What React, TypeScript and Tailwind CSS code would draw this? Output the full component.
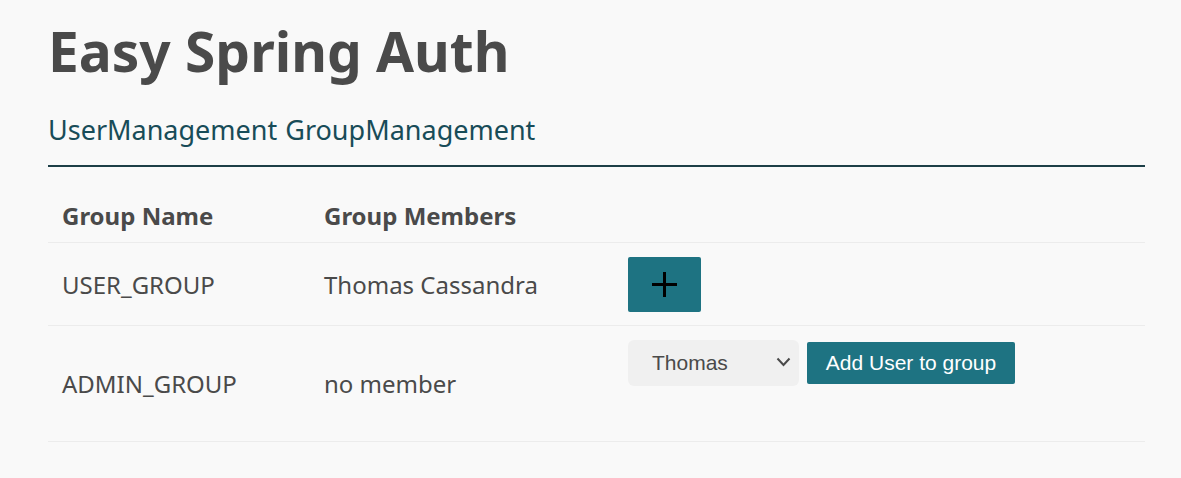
const groups = [
  { name: 'USER_GROUP', members: 'Thomas Cassandra' },
  { name: 'ADMIN_GROUP', members: 'no member' },
];

const App: React.FC = () => {
  return (
    <div className="min-h-[478px] bg-[#f9f9f9] pl-12 pr-9 text-[#4a4a4a] font-['Noto_Sans',sans-serif]">
      <h1 className="pt-[11px] text-[55px] font-bold leading-[80px]">Easy Spring Auth</h1>
      {/* nav */}
      <div className="mt-[23px] flex gap-[8px] border-b-2 border-[#1d3f47] pb-[19px] text-[27px] leading-[32px] text-[#184c58]">
        <a>UserManagement</a>
        <a>GroupManagement</a>
      </div>
      <table className="mt-[23px] w-full border-collapse text-left text-[24px] leading-[32px]">
        <thead>
          <tr className="border-b border-[#ececec]">
            <th className="w-[262px] px-[14px] py-[10px] font-bold">Group Name</th>
            <th className="w-[304px] px-[14px] py-[10px] font-bold">Group Members</th>
            <th></th>
          </tr>
        </thead>
        <tbody>
          <tr className="border-b border-[#ececec]">
            <td className="px-[14px] pb-[13px] pt-[14px] align-middle">{groups[0].name}</td>
            <td className="px-[14px] pb-[13px] pt-[14px] align-middle">{groups[0].members}</td>
            <td className="px-[14px] pb-[13px] pt-[14px] align-middle">
              <button className="flex h-[55px] w-[73px] items-center justify-center rounded-[2px] bg-[#1e7382]">
                <svg width="27" height="27" viewBox="0 0 27 27" stroke="#000" strokeWidth="3">
                  <line x1="13.5" y1="1" x2="13.5" y2="26" />
                  <line x1="1" y1="13.5" x2="26" y2="13.5" />
                </svg>
              </button>
            </td>
          </tr>
          <tr className="border-b border-[#ececec]">
            <td className="px-[14px] py-[14px] align-middle">{groups[1].name}</td>
            <td className="px-[14px] py-[14px] align-middle">{groups[1].members}</td>
            <td className="px-[14px] pb-[13px] pt-[14px] align-top">
              <div className="flex h-[88px] items-start gap-2 font-['Liberation_Sans',sans-serif]">
                <div className="relative flex h-[46px] w-[171px] items-center rounded-[6px] bg-[#f0f0f0] pl-6 text-[21px] leading-[24px] text-[#4a4a4a]">
                  Thomas
                  <svg
                    className="absolute right-[8px] top-[17px]"
                    width="15"
                    height="10"
                    viewBox="0 0 15 10"
                    fill="none"
                    stroke="#4a4a4a"
                    strokeWidth="2"
                  >
                    <polyline points="1.5,1.5 7.5,8 13.5,1.5" />
                  </svg>
                </div>
                <button className="mt-[2px] h-[42px] w-[208px] rounded-[2px] bg-[#1e7382] text-[21px] leading-[24px] text-white">
                  Add User to group
                </button>
              </div>
            </td>
          </tr>
        </tbody>
      </table>
    </div>
  );
};

export default App;
